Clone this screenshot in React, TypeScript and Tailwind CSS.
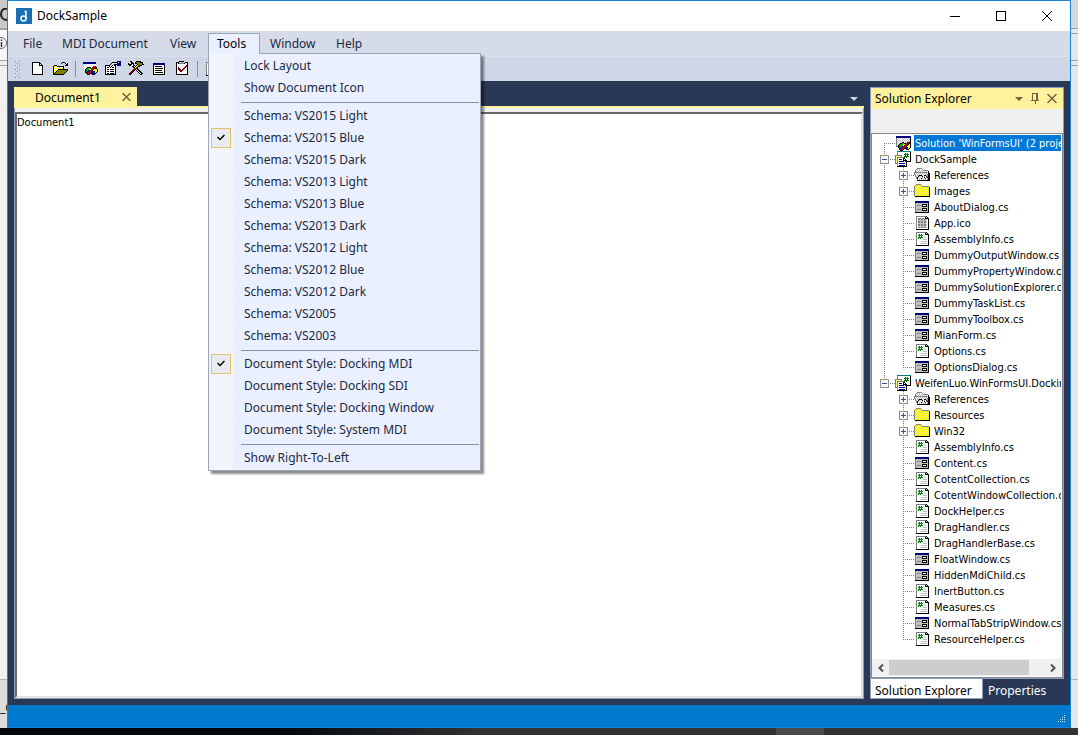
import { useState } from "react";

const PALETTE: Record<string, string> = {
  k: "#000000",
  w: "#ffffff",
  n: "#000080",
  g: "#808080",
  s: "#c0c0c0",
  y: "#ffff00",
  Y: "#ffff80",
  d: "#e8e85a",
  o: "#808000",
  r: "#c00000",
  m: "#800000",
  G: "#008000",
  L: "#00c000",
  b: "#0000ff",
  t: "#008080",
};

const ICONS: Record<string, string[]> = {
  newFile: [
    "................",
    "...kkkkkkkk.....",
    "...kwwwwwwkk....",
    "...kwwwwwwkwk...",
    "...kwwwwwwkkkk..",
    "...kwwwwwwwwwk..",
    "...kwwwwwwwwwk..",
    "...kwwwwwwwwwk..",
    "...kwwwwwwwwwk..",
    "...kwwwwwwwwwk..",
    "...kwwwwwwwwwk..",
    "...kwwwwwwwwwk..",
    "...kwwwwwwwwwk..",
    "...kkkkkkkkkkk..",
  ],
  open: [
    "................",
    "..........kkk...",
    ".........k...k.k",
    "..............kk",
    "..kkk........kkk",
    ".kywykkkkkkk....",
    ".kwywywywywk....",
    ".kywywywywyk....",
    ".kwywykkkkkkkkkk",
    ".kywykoooooooook",
    ".kwykoooooooook.",
    ".kykoooooooook..",
    ".kkoooooooook...",
    ".kkkkkkkkkkk....",
  ],
  solution: [
    "................",
    ".nnnnnnnnnnnnn..",
    ".nnnnnnnnnnnnn..",
    ".swwwwwwwwwwww..",
    ".swwwwwwwwwwww..",
    ".swwwwwwwwwrrr..",
    ".swwwkkkkwrrrrk.",
    ".swwkLLLLrrrkkk.",
    ".swkGLLyyrrkyyyk",
    ".swkGLbbrrkyyyyk",
    "..skGbbrrrkbbyyk",
    "...kkbrrrkbbbyk.",
    "....krrrkkkbkk..",
    ".....kkk..kkk...",
  ],
  solutionNode: [
    "................",
    ".nnnnnnnnnnnnnnn",
    ".nnnnnnnnnnnnnnn",
    ".gwswswswswswswk",
    ".gswswswswswswsk",
    ".gwswswswswswswk",
    ".gswswswswswswsk",
    ".gwswswkkwswkkkk",
    ".gswskkLLkkrrrkk",
    ".gwskGLLyyrrrkyk",
    ".gskGLLLyrrrkyyk",
    ".ggkGGLbrrrkyyyk",
    "...kGGbrrrkbbyyk",
    "....kbrrrkkbbyk.",
    "....krrrk..kkk..",
    ".....kkk........",
  ],
  properties: [
    "............nnnn",
    ".......kkkkknwnn",
    "......kswswsnnnn",
    ".....kswskkknnnn",
    "kkkkkwskwkk.nnnn",
    "kwwwkskwwwk.....",
    "kwkkwkwkkwk.....",
    "kwwwwwwwwwk.....",
    "kwkkwkkkkwk.....",
    "kwwwwwwwwwk.....",
    "kwkkwkkkkwk.....",
    "kwwwwwwwwwk.....",
    "kwkkwkkkkwk.....",
    "kkkkkkkkkkk.....",
  ],
  tools: [
    "..kk....kkkkk...",
    "...kk..kooookkk.",
    "k..kkk.kkoooooky",
    "kkkkwk...kooookk",
    ".kkwwkk.kyokkk..",
    "....kkwkyokk....",
    ".....kkyok......",
    "......mokk......",
    ".....mmkwkk.....",
    "....mmk.kwkk....",
    "...mmk...kwkk...",
    "..mmk.....kwkk..",
    ".mmk.......kwkk.",
    ".kk.........kk..",
  ],
  list: [
    "................",
    "................",
    "..nnnnnnnnnnnn..",
    "..nnnnnnnnnnnn..",
    "..kwwwwwwwwwwk..",
    "..kwkkkkkkkwwk..",
    "..kwwwwwwwwwwk..",
    "..kwkkkkkkkkwk..",
    "..kwwwwwwwwwwk..",
    "..kwkkkkkkkwwk..",
    "..kwwwwwwwwwwk..",
    "..kwkkkkkkkkwk..",
    "..kwwwwwwwwwwk..",
    "..kkkkkkkkkkkk..",
  ],
  task: [
    ".....kkkkk......",
    "..kkksssssskkk..",
    "..kwkgggggkwwk..",
    "..kwwwwwwwwwwk..",
    "..kwwwwwwwwwmk..",
    "..kwwwwwwwwmmk..",
    "..kwmwwwwwmmwk..",
    "..kwmmwwwmmwwk..",
    "..kwmmmwmmwwwk..",
    "..kwwmmmmwwwwk..",
    "..kwwwmmwwwwwk..",
    "..kwwwwwwwwwwk..",
    "..kwwwwwwwwwwk..",
    "..kkkkkkkkkkkk..",
  ],
  project: [
    "..tttttttttttttt",
    "..gwwwwwwwwwwwwk",
    "..gwwwwwwwGwGwwk",
    "..gwwwwwwGGGGGwk",
    "gggggggwwwGwGwwk",
    "gYYYYYgwwGGGGGwk",
    "gYgggggggGwGwwwk",
    "gYgwwwwwkkwwwwwk",
    "gYgwnnnwkwkwwwwk",
    "gYgwwwwwkkkkwwwk",
    "gYgwnnnnnwkkkkkk",
    "gYgwwwwwwwwk....",
    "gggwnnnnnnwk....",
    "..gwwwwwwwwk....",
    "..gwnnnnnnwk....",
    "..kkkkkkkkkk....",
  ],
  folder: [
    "................",
    "..ggggg.........",
    ".gydydyg........",
    "gydydydyggggggg.",
    "gdydydydydydydyk",
    "gydydydydydydydk",
    "gdydydydydydydyk",
    "gydydydydydydydk",
    "gdydydydydydydyk",
    "gydydydydydydydk",
    "gdydydydydydydyk",
    "gydydydydydydydk",
    "gdydydydydydydyk",
    ".kkkkkkkkkkkkkkk",
  ],
  references: [
    "................",
    "...ggggg........",
    "..gswswwg.......",
    ".gwswswswggggg..",
    ".gswswswswswswk.",
    "gggggggggggggsk.",
    "gwswswswswswgwkk",
    "gswswswswswswgkk",
    ".gwsgkkkswkksgkk",
    ".gswkswskwswkgkk",
    "..gkswswswkwskkk",
    "..gkwswkswskwskk",
    "...gwswswswswgkk",
    "...kkkkkkkkkkkkk",
  ],
  form: [
    "................",
    "................",
    ".nnnnnnnnnnnnnn.",
    ".nnnnnnnnnnnnnn.",
    ".gssssssssssssk.",
    ".gsssssskkkkksk.",
    ".gsggggskwwwksk.",
    ".gsssssskkkkksk.",
    ".gssssssssssssk.",
    ".gsssssskkkkksk.",
    ".gsggggskwwwksk.",
    ".gsssssskkkkksk.",
    ".gssssssssssssk.",
    ".kkkkkkkkkkkkkk.",
  ],
  code: [
    "................",
    "..ggggggggggk...",
    "..gwwwwwwwwkwk..",
    "..gwwGwGwwwkkkk.",
    "..gwGGGGGwwwwwk.",
    "..gwwGwGwwwwwwk.",
    "..gwGGGGGwsswwk.",
    "..gwGwGwwwwwwwk.",
    "..gwwwwwwsssswk.",
    "..gwwwwwwwwwwwk.",
    "..gwwwwsssssswk.",
    "..gwwwwwwwwwwwk.",
    "..gwwwssssssswk.",
    "..gwwwwwwwwwwwk.",
    "..kkkkkkkkkkkkk.",
  ],
  ico: [
    "................",
    "..ggggggggggk...",
    "..gwwwwwwwwkwk..",
    "..gwgggsggskkkk.",
    "..gwggsggsggswk.",
    "..gwsssssssswwk.",
    "..gwggsggsggswk.",
    "..gwggsggsggswk.",
    "..gwsssssssswwk.",
    "..gwggsggsggswk.",
    "..gwggsggsggswk.",
    "..gwsssssssswwk.",
    "..gwggsggsggswk.",
    "..gwwwwwwwwwwwk.",
    "..kkkkkkkkkkkkk.",
  ],
};

function PixelIcon({ name }: { name: string }) {
  return (
    <svg width="16" height="16" viewBox="0 0 16 16" shapeRendering="crispEdges" className="block shrink-0" aria-hidden="true">
      {ICONS[name].map((row, y) =>
        row.split("").map((c, x) =>
          c === "." ? null : <rect key={`${x}-${y}`} x={x} y={y} width="1" height="1" fill={PALETTE[c]} />
        )
      )}
    </svg>
  );
}

type Node = { label: string; icon: string; level: 0 | 1; box?: "+" | "-"; selected?: boolean };

const forms = (...labels: string[]): Node[] => labels.map((label) => ({ label, icon: "form", level: 1 }));
const sources = (...labels: string[]): Node[] => labels.map((label) => ({ label, icon: "code", level: 1 }));

const TREE: Node[] = [
  { label: "Solution 'WinFormsUI' (2 projects)", icon: "solutionNode", level: 0, selected: true },
  { label: "DockSample", icon: "project", level: 0, box: "-" },
  { label: "References", icon: "references", level: 1, box: "+" },
  { label: "Images", icon: "folder", level: 1, box: "+" },
  ...forms("AboutDialog.cs"),
  { label: "App.ico", icon: "ico", level: 1 },
  ...sources("AssemblyInfo.cs"),
  ...forms(
    "DummyOutputWindow.cs",
    "DummyPropertyWindow.cs",
    "DummySolutionExplorer.cs",
    "DummyTaskList.cs",
    "DummyToolbox.cs",
    "MianForm.cs"
  ),
  ...sources("Options.cs"),
  ...forms("OptionsDialog.cs"),
  { label: "WeifenLuo.WinFormsUI.Docking", icon: "project", level: 0, box: "-" },
  { label: "References", icon: "references", level: 1, box: "+" },
  { label: "Resources", icon: "folder", level: 1, box: "+" },
  { label: "Win32", icon: "folder", level: 1, box: "+" },
  ...sources("AssemblyInfo.cs"),
  ...forms("Content.cs"),
  ...sources("CotentCollection.cs", "CotentWindowCollection.cs", "DockHelper.cs", "DragHandler.cs", "DragHandlerBase.cs"),
  ...forms("FloatWindow.cs", "HiddenMdiChild.cs"),
  ...sources("InertButton.cs", "Measures.cs"),
  ...forms("NormalTabStripWindow.cs"),
  ...sources("ResourceHelper.cs"),
];

const LAST_ROOT = TREE.map((n) => n.level).lastIndexOf(0);

// dotted connector lines and the +/- box in front of a node
function Guide({ index }: { index: number }) {
  const node = TREE[index];
  const next = TREE[index + 1];
  const width = node.level === 0 ? 23 : 42;
  const cx = node.level === 0 ? 12 : 31;
  const lines: string[] = [];
  if (index <= LAST_ROOT) {
    const from = index === 0 ? 8 : 0;
    const to = index === LAST_ROOT ? 8 : 16;
    lines.push(`M12.5 ${from}V${to}`);
  }
  if (node.level === 1) lines.push(next && next.level === 1 ? "M31.5 0V16" : "M31.5 0V8");
  lines.push(`M${cx} 8.5H${width}`);
  return (
    <svg width={width} height="16" shapeRendering="crispEdges" className="block shrink-0" aria-hidden="true">
      <path d={lines.join("")} stroke="#808080" strokeDasharray="1 1" fill="none" />
      {node.box && (
        <>
          <rect x={cx - 3.5} y="4.5" width="8" height="8" fill="#f8f8f8" stroke="#919191" />
          <path d={`M${cx - 2} 8.5h5`} stroke="#33549c" />
          {node.box === "+" && <path d={`M${cx + 0.5} 6v5`} stroke="#33549c" />}
        </>
      )}
    </svg>
  );
}

const MENU_GROUPS = [
  ["Lock Layout", "Show Document Icon"],
  [
    "Schema: VS2015 Light",
    "Schema: VS2015 Blue",
    "Schema: VS2015 Dark",
    "Schema: VS2013 Light",
    "Schema: VS2013 Blue",
    "Schema: VS2013 Dark",
    "Schema: VS2012 Light",
    "Schema: VS2012 Blue",
    "Schema: VS2012 Dark",
    "Schema: VS2005",
    "Schema: VS2003",
  ],
  [
    "Document Style: Docking MDI",
    "Document Style: Docking SDI",
    "Document Style: Docking Window",
    "Document Style: System MDI",
  ],
  ["Show Right-To-Left"],
];

const CHECKED = ["Schema: VS2015 Blue", "Document Style: Docking MDI"];

function ToolsMenu() {
  return (
    <div
      role="menu"
      className="absolute left-0 top-5 z-10 w-[273px] border border-[#9ba7b7] bg-[#eaf0ff] bg-linear-to-r from-[#f2f4fe] from-[24px] to-[#eaf0ff] to-[24px] py-px text-[#1b293e] shadow-[3px_3px_2px_rgba(0,0,0,0.45)]"
    >
      {MENU_GROUPS.map((group, i) => (
        <div key={group[0]}>
          {i > 0 && (
            <div className="flex h-[6px] items-center pl-8 pr-px">
              <div className="h-px w-full bg-[#8591a2]" />
            </div>
          )}
          {group.map((item) => (
            <button key={item} role="menuitem" className="flex h-[22px] w-full items-center whitespace-nowrap pl-[2px] text-left">
              <span className="mr-[13px] flex size-5 shrink-0 items-center justify-center">
                {CHECKED.includes(item) && (
                  <span className="flex size-5 items-center justify-center border border-[#e5c365] bg-[#e8ecf0]">
                    <svg width="8" height="8" viewBox="0 0 8 8" aria-hidden="true">
                      <path d="M0.5 3L3 5.5L7.5 1" stroke="#000" strokeWidth="1.5" fill="none" />
                    </svg>
                  </span>
                )}
              </span>
              {item}
            </button>
          ))}
        </div>
      ))}
    </div>
  );
}

function TitleBar() {
  return (
    <header className="flex h-[30px] shrink-0 items-center bg-white pl-2">
      <svg width="16" height="16" viewBox="0 0 16 16" aria-hidden="true">
        <rect width="16" height="16" fill="#1a6fb3" />
        <circle cx="7.5" cy="10.5" r="2.5" stroke="#fff" strokeWidth="1.5" fill="none" />
        <path d="M10 11V3.5H8.5" stroke="#fff" strokeWidth="1.5" fill="none" />
      </svg>
      <h1 className="ml-[5px] flex-1 text-black">DockSample</h1>
      <button aria-label="Minimize" className="flex h-full w-[46px] items-center justify-center">
        <svg width="10" height="10" shapeRendering="crispEdges"><path d="M0 5.5h10" stroke="#000" /></svg>
      </button>
      <button aria-label="Maximize" className="flex h-full w-[46px] items-center justify-center">
        <svg width="10" height="10" shapeRendering="crispEdges"><path d="M.5 .5h9v9h-9z" stroke="#000" fill="none" /></svg>
      </button>
      <button aria-label="Close" className="flex h-full w-[46px] items-center justify-center">
        <svg width="10" height="10"><path d="M0 0l10 10M10 0L0 10" stroke="#000" /></svg>
      </button>
    </header>
  );
}

function MenuBar({ open, onToggle }: { open: boolean; onToggle: () => void }) {
  return (
    <nav className="flex h-[25px] shrink-0 items-center bg-[#d6dbe9] pl-[5px] text-[#1b293e]">
      <button className="w-[39px] pl-[10px] text-left">File</button>
      <button className="w-[108px] whitespace-nowrap pl-[10px] text-left">MDI Document</button>
      <button className="w-12 pl-[10px] text-left">View</button>
      <div className="relative mt-[2px] h-[23px]">
        <button
          onClick={onToggle}
          className={
            open
              ? "relative z-20 h-[21px] w-[52px] border border-b-0 border-[#9ba7b7] bg-[#eaf0ff] pl-2 text-left text-black"
              : "h-[21px] w-[52px] pl-[9px] text-left"
          }
        >
          Tools
        </button>
        {open && <ToolsMenu />}
      </div>
      <button className="w-[66px] pl-[10px] text-left">Window</button>
      <button className="w-12 pl-[10px] text-left">Help</button>
    </nav>
  );
}

function ToolButton({ label, icon }: { label: string; icon: string }) {
  return (
    <button aria-label={label} className="h-[23px] w-[23px] px-[3px]">
      <PixelIcon name={icon} />
    </button>
  );
}

function ToolBar() {
  return (
    <div className="flex h-[25px] shrink-0 items-center border-t border-[#dce0ec] bg-[#cfd6e5] pl-[7px]">
      <svg width="5" height="17" shapeRendering="crispEdges" className="mr-[6px]" aria-hidden="true">
        <path d="M.5 0V17M4.5 0V17" stroke="#7f8aa0" strokeDasharray="1 3" />
        <path d="M2.5 2V17" stroke="#7f8aa0" strokeDasharray="1 3" />
      </svg>
      <ToolButton label="New" icon="newFile" />
      <ToolButton label="Open" icon="open" />
      <div className="mx-[3px] h-4 w-px bg-[#8591a2]" />
      <ToolButton label="Solution Explorer" icon="solution" />
      <ToolButton label="Property Window" icon="properties" />
      <ToolButton label="Toolbox" icon="tools" />
      <ToolButton label="Output Window" icon="list" />
      <ToolButton label="Task List" icon="task" />
      <div className="mx-[3px] h-4 w-px bg-[#8591a2]" />
      <ToolButton label="Layout" icon="code" />
    </div>
  );
}

function DocumentPane() {
  return (
    <main className="flex min-w-0 flex-1 flex-col">
      <div className="flex h-[19px] shrink-0 items-center">
        <div className="flex h-full w-[123px] items-center bg-[#fff29d] pl-[21px] text-black">
          <span className="flex-1 pt-[2px]">Document1</span>
          <button aria-label="Close Document1" className="mr-[6px]">
            <svg width="9" height="8"><path d="M.5 0l8 8M8.5 0l-8 8" stroke="#75633d" strokeWidth="1.5" /></svg>
          </button>
        </div>
        <button aria-label="Document list" className="ml-auto mr-[6px] mt-1">
          <svg width="8" height="4"><path d="M0 0h8l-4 4z" fill="#ced4dd" /></svg>
        </button>
      </div>
      <div className="flex flex-1 flex-col border-t-2 border-t-[#fff29d]">
        <div className="flex flex-1 flex-col border border-t-0 border-[#8e9bbc] bg-[#f0f0f0] pt-1">
          <textarea
            aria-label="Document1"
            defaultValue="Document1"
            spellCheck={false}
            className="w-full flex-1 resize-none border-2 border-b-[#e3e3e3] border-l-[#696969] border-r-[#e3e3e3] border-t-[#696969] bg-white pt-px font-['DejaVu_Sans_Condensed','Liberation_Sans',sans-serif] text-[11px] leading-4 text-black outline-none"
          />
        </div>
      </div>
    </main>
  );
}

function SolutionExplorer() {
  return (
    <aside className="flex w-[194px] shrink-0 flex-col">
      <div className="flex min-h-0 flex-1 flex-col border border-[#8e9bbc] bg-[#f0f0f0]">
        <div className="flex h-[21px] shrink-0 items-center bg-[#fff29d] pl-1 text-black">
          <h2 className="flex-1">Solution Explorer</h2>
          <button aria-label="Window position" className="mr-2">
            <svg width="8" height="4"><path d="M0 0h8l-4 4z" fill="#75633d" /></svg>
          </button>
          <button aria-label="Auto hide" className="mr-2">
            <svg width="8" height="11" shapeRendering="crispEdges">
              <path d="M1.5 7V.5h5V7M5.5 0v7M0 7.5h8M4 7v4" stroke="#75633d" fill="none" />
            </svg>
          </button>
          <button aria-label="Close" className="mr-[6px]">
            <svg width="10" height="9"><path d="M.5 0l9 9M9.5 0l-9 9" stroke="#75633d" strokeWidth="1.5" /></svg>
          </button>
        </div>
        <div className="mt-6 flex min-h-0 flex-1 flex-col border border-[#828790] bg-white py-px pr-px">
          <ul
            role="tree"
            className="min-h-0 flex-1 overflow-hidden font-['DejaVu_Sans_Condensed','Liberation_Sans',sans-serif] text-[11px] leading-4 text-black"
          >
            {TREE.map((node, i) => (
              <li key={i} role="treeitem" className="flex h-4 whitespace-nowrap">
                <Guide index={i} />
                <PixelIcon name={node.icon} />
                <span className={node.selected ? "ml-[3px] h-4 bg-[#0078d7] px-px pt-px text-white" : "ml-[3px] h-4 px-px pt-px"}>
                  {node.label}
                </span>
              </li>
            ))}
          </ul>
          <div className="flex h-[17px] shrink-0 items-center bg-[#f0f0f0]">
            <button aria-label="Scroll left" className="flex w-[17px] justify-center">
              <svg width="6" height="8"><path d="M5 .5L1.5 4L5 7.5" stroke="#505050" strokeWidth="2" fill="none" /></svg>
            </button>
            <div className="flex-1">
              <div className="h-[15px] w-[90%] bg-[#cdcdcd]" />
            </div>
            <button aria-label="Scroll right" className="flex w-[17px] justify-center">
              <svg width="6" height="8"><path d="M1 .5L4.5 4L1 7.5" stroke="#505050" strokeWidth="2" fill="none" /></svg>
            </button>
          </div>
        </div>
      </div>
      <div className="flex h-5 shrink-0">
        <button className="h-full w-[113px] whitespace-nowrap border border-t-0 border-[#8e9bbc] bg-white pl-1 pt-1 text-left text-black">
          Solution Explorer
        </button>
        <button className="h-full px-[5px] pt-1 text-white">Properties</button>
      </div>
    </aside>
  );
}

function StatusBar() {
  return (
    <footer className="flex h-[22px] shrink-0 items-end justify-end bg-[#007acc] p-1">
      <svg width="9" height="9" shapeRendering="crispEdges" aria-hidden="true">
        <path
          d="M7 1.5h1M5 3.5h1M7 3.5h1M3 5.5h1M5 5.5h1M7 5.5h1M1 7.5h1M3 7.5h1M5 7.5h1M7 7.5h1"
          stroke="#c8e2f5"
        />
      </svg>
    </footer>
  );
}

export default function App() {
  const [menuOpen, setMenuOpen] = useState(true);

  return (
    <div className="flex h-screen flex-col overflow-hidden bg-[#0b0f14] font-['Noto_Sans',sans-serif] text-[12px] leading-4">
      <div className="flex min-h-0 flex-1">
        {/* edge of the window behind, left */}
        <div className="flex w-[7px] shrink-0 flex-col overflow-hidden bg-[#f0f0f0]">
          <div className="h-[29px] border-b border-[#a0a0a0] bg-[#c9c9c9] pt-2">
            <svg width="7" height="14" aria-hidden="true">
              <path d="M7 1C3 0 1 3 1 6s2 6 6 6" stroke="#222" strokeWidth="2" fill="none" />
            </svg>
          </div>
          <div className="h-[32px] border-y border-[#a0a0a0] bg-[#f8f8f8] pt-[6px]">
            <svg width="7" height="14" aria-hidden="true">
              <circle cx="1" cy="7" r="5.5" stroke="#666" fill="none" />
              <path d="M1.5 3.5v1.5M1.5 6v5" stroke="#333" strokeWidth="1.5" />
            </svg>
          </div>
          <div className="h-[5px] border-b border-[#a0a0a0]" />
          <div className="flex-1" />
          <div className="h-[49px] border-t border-[#b4b4b4] bg-[#dcdcdc] pt-5 text-black">_C</div>
        </div>
        <div className="flex min-w-0 flex-1 flex-col border border-[#1883d7]">
          <TitleBar />
          <MenuBar open={menuOpen} onToggle={() => setMenuOpen(!menuOpen)} />
          <ToolBar />
          <div className="flex min-h-0 flex-1 gap-[6px] bg-[#293955] p-[6px]">
            <DocumentPane />
            <SolutionExplorer />
          </div>
          <StatusBar />
        </div>
        {/* edge of the window behind, right */}
        <div className="flex w-[7px] shrink-0 flex-col bg-[#e6e6e6]">
          <div className="h-[29px] border-b border-[#a0a0a0] bg-[#d6d6d6]" />
          <div className="h-[5px] border-b border-[#a0a0a0]" />
          <div className="h-[27px] border-b border-[#a0a0a0]" />
          <div className="h-[5px] border-b border-[#a0a0a0]" />
          <div className="flex-1" />
          <div className="h-[49px] border-t border-[#b4b4b4]" />
        </div>
      </div>
      <div className="flex h-[7px] shrink-0 bg-linear-to-r from-[#04070d] from-25% to-[#333333] to-45% pl-[72%]">
        <div className="w-12 bg-[#4a4a4a]" />
      </div>
    </div>
  );
}
